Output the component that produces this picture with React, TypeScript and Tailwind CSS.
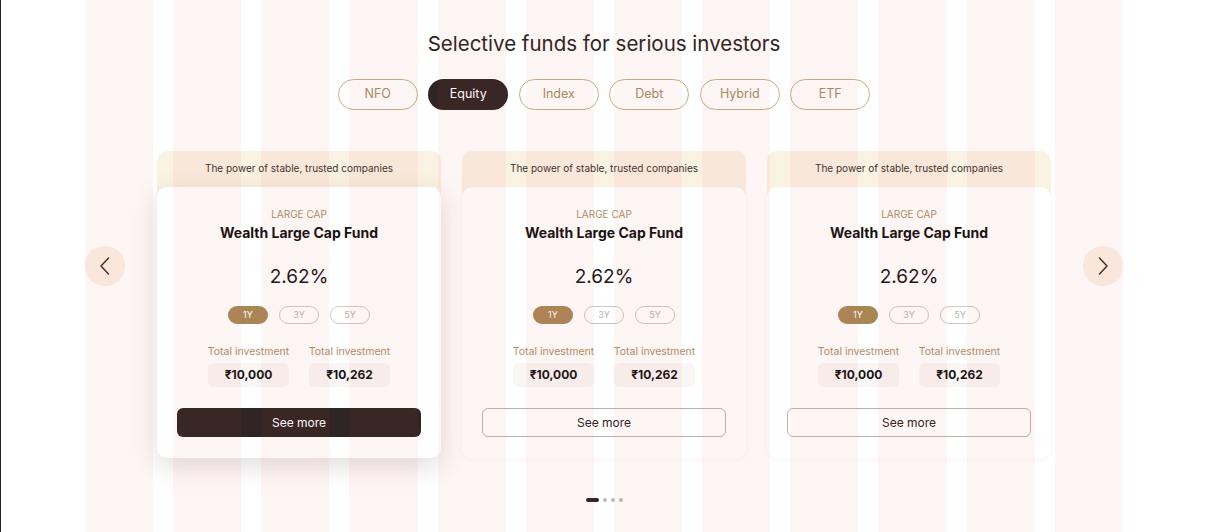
import React from "react";

const font = { fontFamily: "Inter, 'Noto Sans', sans-serif" };

const tabs = ["NFO", "Equity", "Index", "Debt", "Hybrid", "ETF"];

function Chevron({ dir }: { dir: "left" | "right" }) {
  return (
    <svg width="12" height="18" viewBox="0 0 12 18" fill="none">
      {dir === "left" ? (
        <path d="M9.5 1 L2 9 L9.5 17" stroke="#3a2f2d" strokeWidth="1.5" strokeLinecap="round" strokeLinejoin="round" />
      ) : (
        <path d="M2.5 1 L10 9 L2.5 17" stroke="#3a2f2d" strokeWidth="1.5" strokeLinecap="round" strokeLinejoin="round" />
      )}
    </svg>
  );
}

function Card({ active }: { active: boolean }) {
  return (
    <div className="flex w-[284px] flex-col">
      <div className="flex h-[44px] justify-center rounded-t-[10px] bg-[#faf2e2] pt-[9px] text-[10px] leading-[16px] text-[#3a302e]">
        The power of stable, trusted companies
      </div>
      <div
        className={
          "relative -mt-[8px] flex flex-col items-center rounded-[10px] bg-white px-[20px] pb-[21px] pt-[20px] " +
          (active ? "shadow-[0_8px_26px_rgba(70,45,35,0.16)]" : "shadow-[0_2px_6px_rgba(70,45,35,0.04)]")
        }
      >
        <div className="text-[10px] leading-[14px] text-[#b08e5f]">LARGE CAP</div>
        <div className="mt-[2px] text-[14px] font-bold leading-[20px] text-[#141010]">Wealth Large Cap Fund</div>
        <div className="mt-[20px] text-[19px] leading-[28px] text-[#1a1414]">2.62%</div>
        <div className="mt-[15px] flex gap-[11px]">
          <div className="flex h-[18px] w-[40px] items-center justify-center rounded-full bg-[#a98755] text-[9px] text-white">1Y</div>
          <div className="flex h-[18px] w-[40px] items-center justify-center rounded-full border border-[#cfc8c6] text-[9px] text-[#b9b1af]">3Y</div>
          <div className="flex h-[18px] w-[40px] items-center justify-center rounded-full border border-[#cfc8c6] text-[9px] text-[#b9b1af]">5Y</div>
        </div>
        <div className="mt-[21px] flex gap-[20px]">
          {["₹10,000", "₹10,262"].map((v) => (
            <div key={v} className="flex w-[81px] flex-col items-center">
              <div className="whitespace-nowrap text-[10.5px] leading-[14px] text-[#b08e5f]">Total investment</div>
              <div className="mt-[4px] flex h-[24px] w-[81px] items-center justify-center rounded-[6px] bg-[#f9f6f5] text-[12px] font-bold text-[#141010]">
                {v}
              </div>
            </div>
          ))}
        </div>
        <button
          className={
            "mt-[21px] flex h-[29px] w-[244px] items-center justify-center rounded-[6px] text-[12px] " +
            (active ? "bg-[#2e2524] text-white" : "border border-[#bfb3b0] bg-white text-[#2a2220]")
          }
        >
          See more
        </button>
      </div>
    </div>
  );
}

export default function App() {
  return (
    <div className="relative min-h-[532px] overflow-hidden border-l border-[#222] bg-white" style={font}>
      <div className="flex flex-col items-center pl-[2px]">
        <h1 className="pt-[30px] text-[20.5px] leading-[28px] text-[#2a2220]">Selective funds for serious investors</h1>
        <div className="mt-[21px] flex gap-[10.5px]">
          {tabs.map((t) => (
            <div
              key={t}
              className={
                "flex h-[31px] w-[80px] items-center justify-center rounded-full text-[12.5px] " +
                (t === "Equity" ? "bg-[#2e2524] text-white" : "border border-[#c9ad84] text-[#a88a5e]")
              }
            >
              {t}
            </div>
          ))}
        </div>
        <div className="mt-[41px] flex items-start gap-[32px]">
          <div className="mt-[95px] flex h-[40px] w-[40px] items-center justify-center rounded-full bg-[#fbf0e4]">
            <Chevron dir="left" />
          </div>
          <div className="flex gap-[21px]">
            <Card active />
            <Card active={false} />
            <Card active={false} />
          </div>
          <div className="mt-[95px] flex h-[40px] w-[40px] items-center justify-center rounded-full bg-[#fbf0e4]">
            <Chevron dir="right" />
          </div>
        </div>
        <div className="mt-[40px] flex items-center gap-[4px]">
          <div className="h-[4px] w-[13px] rounded-full bg-[#2e2524]" />
          <div className="h-[4px] w-[4px] rounded-full bg-[#bdb8b7]" />
          <div className="h-[4px] w-[4px] rounded-full bg-[#bdb8b7]" />
          <div className="h-[4px] w-[4px] rounded-full bg-[#bdb8b7]" />
        </div>
      </div>
      <div className="pointer-events-none absolute inset-y-0 left-[84px] grid w-[1038px] grid-cols-12 gap-[20px]">
        {Array.from({ length: 12 }).map((_, i) => (
          <div key={i} className="bg-[rgba(235,90,80,0.06)]" />
        ))}
      </div>
    </div>
  );
}
